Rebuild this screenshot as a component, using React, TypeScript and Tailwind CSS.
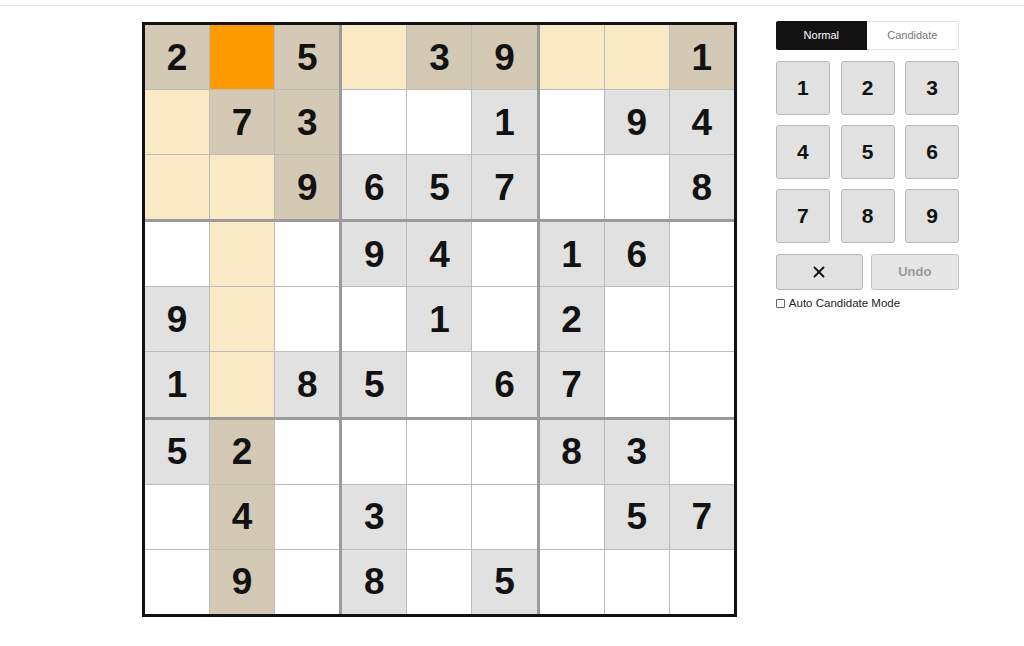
import { X } from 'lucide-react'

const puzzle = [
  '2.5.39..1',
  '.73..1.94',
  '..9657..8',
  '...94.16.',
  '9...1.2..',
  '1.85.67..',
  '52....83.',
  '.4.3...57',
  '.9.8.5...',
]

const selRow = 0
const selCol = 1

const cellClass = (r: number, c: number, val: string) => {
  const given = val !== '.'
  if (r === selRow && c === selCol) return 'bg-[#fb9b00]'
  const peer =
    r === selRow ||
    c === selCol ||
    (Math.floor(r / 3) === Math.floor(selRow / 3) && Math.floor(c / 3) === Math.floor(selCol / 3))
  if (peer) return given ? 'bg-[#d3c9b5]' : 'bg-[#f9e9c5]'
  return given ? 'bg-[#e1e1e1]' : 'bg-white'
}

const Box = ({ br, bc }: { br: number; bc: number }) => {
  const cells = []
  for (let i = 0; i < 3; i++) {
    for (let j = 0; j < 3; j++) {
      const r = br * 3 + i
      const c = bc * 3 + j
      const v = puzzle[r][c]
      cells.push(
        <div
          key={`${r}-${c}`}
          className={`flex h-[64.1px] w-[64.1px] items-center justify-center text-[37px] font-bold leading-none text-[#121212] ${cellClass(r, c, v)}`}
        >
          {v !== '.' ? v : ''}
        </div>,
      )
    }
  }
  return <div className="grid grid-cols-3 gap-px bg-[#bcbcbc]">{cells}</div>
}

const NumButton = ({ n }: { n: number }) => (
  <button className="flex h-[54px] w-[54px] items-center justify-center rounded-[3px] border border-[#b8b8b8] bg-[#e1e1e1] text-[21px] font-bold text-[#121212]">
    {n}
  </button>
)

export default function App() {
  return (
    <div className="min-h-[646px] bg-white" style={{ fontFamily: '"Liberation Sans", Arial, sans-serif' }}>
      <div className="h-[6px] border-b border-[#e6e6e6]" />
      <div className="flex items-start gap-[39px] pl-[142px] pt-[16px]">
        <div className="grid grid-cols-3 gap-[3px] border-[3px] border-[#121212] bg-[#9b9b9b]">
          {[0, 1, 2].map((br) => [0, 1, 2].map((bc) => <Box key={`${br}${bc}`} br={br} bc={bc} />))}
        </div>

        <div className="flex w-[183px] flex-col">
          <div className="-mt-px flex h-[29px] text-[11px]">
            <div className="flex flex-1 items-center justify-center rounded-l-[2px] bg-[#121212] text-white">Normal</div>
            <div className="flex flex-1 items-center justify-center rounded-r-[2px] border border-l-0 border-[#e0e0e0] text-[#777]">
              Candidate
            </div>
          </div>
          <div className="mt-[11px] grid grid-cols-3 gap-x-[11px] gap-y-[10px]">
            {[1, 2, 3, 4, 5, 6, 7, 8, 9].map((n) => (
              <NumButton key={n} n={n} />
            ))}
          </div>
          <div className="mt-[11px] flex gap-[8px]">
            <button className="flex h-[36px] w-[87px] items-center justify-center rounded-[3px] border border-[#b8b8b8] bg-[#e1e1e1] text-[#121212]">
              <X size={18} strokeWidth={2.5} />
            </button>
            <button className="flex h-[36px] flex-1 items-center justify-center rounded-[3px] border border-[#c4c4c4] bg-[#e6e6e6] text-[13px] font-bold text-[#9a9a9a]">
              Undo
            </button>
          </div>
          <label className="mt-[5px] flex items-center gap-[4px] text-[11.5px] text-[#222]">
            <span className="inline-block h-[9px] w-[9px] rounded-[1px] border border-[#666] bg-white" />
            Auto Candidate Mode
          </label>
        </div>
      </div>
    </div>
  )
}
